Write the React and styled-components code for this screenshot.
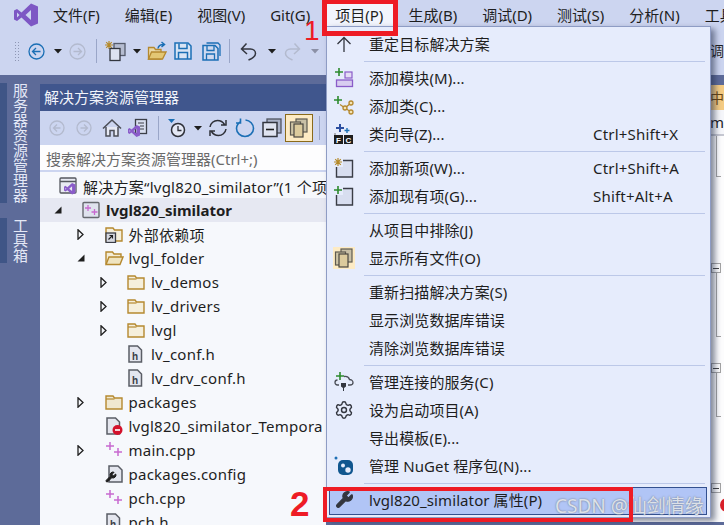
import React from "react"
import styled, { createGlobalStyle } from "styled-components"
import { Settings, Wrench } from "lucide-react"

const colors = {
  chrome: "#ccd5f0",
  band: "#5d6b99",
  title: "#40568d",
  tree: "#f6f8fc",
  menu: "#e6ecfc",
  text: "#1e1e1e",
  red: "#ee1c25",
  tan: "#b5892f",
  blue: "#1b6fb5",
  purple: "#8a5cc9",
  pink: "#c86ad0",
  green: "#2e8b2e",
  grey: "#4a4d55",
  disabled: "#b3bace",
}

const GlobalStyle = createGlobalStyle`
  html, body {
    margin: 0;
    padding: 0;
    background: ${colors.band};
  }

  body {
    font-family: "Noto Sans", "Noto Sans CJK SC", sans-serif;
    font-size: 15px;
    color: ${colors.text};
  }

  svg {
    flex-shrink: 0;
  }
`

const Page = styled.div`
  position: relative;
  display: flex;
  flex-direction: column;
  width: 724px;
  height: 525px;
  overflow: hidden;
  background: ${colors.band};
`

const MenuBar = styled.div`
  display: flex;
  align-items: center;
  flex-shrink: 0;
  gap: 25px;
  height: 33px;
  padding: 0 0 3px 14px;
  box-sizing: border-box;
  background: ${colors.chrome};
  white-space: nowrap;
`

const LogoSlot = styled.div`
  display: flex;
  margin-right: -10px;
  width: 24px;
`

const MenuTitle = styled.span`
  position: relative;
  z-index: 0;
  line-height: 20px;

  ${props =>
    props.$active &&
    `
    &::before {
      content: "";
      position: absolute;
      z-index: -1;
      inset: -10px -10px -8px -10px;
      background: #f2f5fd;
    }
  `}
`

const Toolbar = styled.div`
  display: flex;
  align-items: flex-start;
  flex-shrink: 0;
  height: 42px;
  padding: 6px 0 0 6px;
  box-sizing: border-box;
  background: ${colors.chrome};
  overflow: hidden;
  white-space: nowrap;
`

const Slot = styled.div`
  display: flex;
  align-items: center;
  justify-content: center;
  flex-shrink: 0;
  width: ${props => props.$w}px;
  height: 24px;
`

const Grip = styled.div`
  width: 5px;
  height: 20px;
  background-image: radial-gradient(#8e97b4 0.6px, transparent 0.7px);
  background-size: 3px 3px;
`

const Divider = styled.div`
  flex-shrink: 0;
  width: 1px;
  height: 24px;
  background: #9aa6c8;
`

const Clipped = styled.span`
  flex-shrink: 0;
  line-height: 24px;
  font-size: 14px;
`

const Body = styled.div`
  display: flex;
  flex: 1;
  min-height: 0;
`

const SideRail = styled.div`
  display: flex;
  flex-direction: column;
  flex-shrink: 0;
  gap: 15px;
  width: 40px;
  padding-top: 8px;
  box-sizing: border-box;
`

const SideTab = styled.div`
  width: 33px;
  border-left: 7px solid #3f5586;
  box-sizing: border-box;
  line-height: 27px;
  writing-mode: vertical-rl;
  color: #e4e8f6;
`

const Explorer = styled.div`
  display: flex;
  flex-direction: column;
  flex-shrink: 0;
  width: 286px;
  padding-top: 9px;
  box-sizing: border-box;
`

const ExplorerTitle = styled.div`
  flex-shrink: 0;
  height: 27px;
  padding-left: 4px;
  line-height: 26px;
  background: ${colors.title};
  color: #f2f4fb;
`

const ExplorerTools = styled.div`
  display: flex;
  align-items: center;
  flex-shrink: 0;
  height: 34px;
  padding-left: 4px;
  background: ${colors.chrome};
`

const ToggleBox = styled.div`
  display: flex;
  align-items: center;
  justify-content: center;
  flex-shrink: 0;
  width: 28px;
  height: 28px;
  margin: 0 3px;
  border: 1px solid #8a6a1a;
  box-sizing: border-box;
  background: #fdebc4;
`

const SearchBox = styled.div`
  flex-shrink: 0;
  height: 27px;
  padding-left: 6px;
  border-bottom: 2px solid ${colors.chrome};
  box-sizing: border-box;
  line-height: 28px;
  background: #fdfdfe;
  color: #6a6a6a;
  white-space: nowrap;
`

const Tree = styled.div`
  flex: 1;
  padding-top: 2px;
  overflow: hidden;
  background: ${colors.tree};
`

const Row = styled.div`
  display: flex;
  align-items: center;
  height: 24px;
  padding-left: ${props => 8 + props.$depth * 22.5}px;
  background: ${props => (props.$selected ? "#e6e8f2" : "transparent")};
  font-weight: ${props => (props.$selected ? 700 : 400)};
  letter-spacing: ${props => (props.$selected ? 0 : 0.25)}px;
  white-space: nowrap;
`

const RootRow = styled(Row)`
  padding-left: 19px;
`

const ArrowCell = styled.div`
  display: flex;
  align-items: center;
  justify-content: center;
  flex-shrink: 0;
  width: 20px;
  margin-right: 14px;
`

const TreeIcon = styled.div`
  display: flex;
  flex-shrink: 0;
  width: 18px;
  margin-right: 6px;
`

const Editor = styled.div`
  display: flex;
  flex: 1;
  flex-direction: column;
  min-width: 0;
  padding-top: 10px;
`

const EditorTab = styled.div`
  flex-shrink: 0;
  height: 25px;
  text-align: right;
  line-height: 25px;
  font-size: 14px;
  background: #f5cc84;
  color: #6b4513;
  overflow: hidden;
`

const NavBar = styled.div`
  flex-shrink: 0;
  height: 26px;
  border-bottom: 2px solid #c6c8d2;
  box-sizing: border-box;
  text-align: right;
  line-height: 24px;
  background: #f6f7fb;
  overflow: hidden;
`

const Code = styled.div`
  display: flex;
  flex: 1;
  justify-content: flex-end;
  min-height: 0;
  background: #fdfdfe;
`

const Outline = styled.div`
  display: flex;
  flex-direction: column;
  flex-shrink: 0;
  width: 13px;
  overflow: hidden;
`

const OutlineGap = styled.div`
  flex-shrink: 0;
  height: ${props => props.$h}px;
`

const OutlineRun = styled.div`
  flex-shrink: 0;
  width: 5px;
  height: ${props => props.$h}px;
  margin-left: 5px;
  border-left: 1px solid #a5a5a5;
  border-bottom: 1px solid #a5a5a5;
  box-sizing: border-box;
`

const OutlineBox = styled.div`
  display: flex;
  align-items: center;
  justify-content: center;
  flex-shrink: 0;
  width: 10px;
  height: 10px;
  border: 1px solid #a5a5a5;
  box-sizing: border-box;
  background: #fff;

  &::after {
    content: "";
    width: 6px;
    height: 1px;
    background: #444;
  }
`

const BreakDot = styled.div`
  flex-shrink: 0;
  width: 14px;
  height: 14px;
  margin-left: 9px;
  border-radius: 50%;
  background: #d9202a;
`

const BottomBand = styled.div`
  flex-shrink: 0;
  height: 3px;
  background: ${colors.band};
`

const Dropdown = styled.div`
  position: absolute;
  top: 26px;
  left: 326px;
  width: 385px;
  padding: 4px 3px 2px 2px;
  border: 1px solid #8e9cc4;
  box-sizing: border-box;
  background: ${colors.menu};
  box-shadow: 4px 3px 6px rgba(30, 40, 70, 0.55);
`

const MenuRow = styled.div`
  position: relative;
  display: flex;
  align-items: center;
  height: 28px;
  padding: 0 23px 3px 0;
  box-sizing: border-box;
  white-space: nowrap;
  ${props =>
    props.$selected &&
    `
    background: #b1c5f6;
    outline: 1px solid #33508f;
    outline-offset: -1px;
  `}
`

const MenuIcon = styled.div`
  display: flex;
  align-items: center;
  justify-content: center;
  flex-shrink: 0;
  width: ${props => (props.$boxed ? "22px" : "30px")};
  height: ${props => (props.$boxed ? "22px" : "25px")};
  margin: ${props => (props.$boxed ? "0 14px 0 4px" : "0 10px 0 0")};
  background: ${props => (props.$boxed ? "#fdebc4" : "transparent")};
`

const MenuLabel = styled.span`
  flex: 1;
  letter-spacing: 0.1px;
`

const Shortcut = styled.span`
  width: 91px;
  letter-spacing: 0.2px;
`

const Separator = styled.div`
  height: 1px;
  margin: 2px 2px 3px 35px;
  background: #bcc8e8;
`

const Watermark = styled.span`
  position: absolute;
  top: 467px;
  left: 228px;
  font-size: 19px;
  line-height: 24px;
  white-space: nowrap;
  color: #dde1e8;
  text-shadow: 0 0 2px #6a7280;
`

const TopMark = styled.div`
  position: absolute;
  top: -1px;
  left: 322px;
  width: 76px;
  height: 37px;
  border: 5px solid ${colors.red};
  box-sizing: border-box;
`

const BottomMark = styled.div`
  position: absolute;
  top: 487px;
  left: 323px;
  width: 310px;
  height: 35px;
  border: 4px solid ${colors.red};
  box-sizing: border-box;
`

const StepNumber = styled.span`
  position: absolute;
  top: ${props => props.$top}px;
  left: ${props => props.$left}px;
  font-family: "Liberation Sans", sans-serif;
  font-size: ${props => props.$size}px;
  font-weight: ${props => props.$weight};
  line-height: 1;
  color: ${colors.red};
`

const Svg = ({ size = 18, w, h, children, ...rest }) => (
  <svg width={w || size} height={h || size} viewBox={`0 0 ${w || size} ${h || size}`} fill="none" {...rest}>
    {children}
  </svg>
)

const VsLogo = () => (
  <Svg size={24}>
    <path
      fillRule="evenodd"
      d="M17 .5 24 3.500V20.500L17 23.500 7.500 14.500 3 18 0 16.500V7.500L3 6 7.500 9.500ZM17 7 11.500 12 17 17ZM3 9.500V14.500L5.500 12Z"
      fill="#7d57c4"
    />
  </Svg>
)

const Caret = ({ off }) => (
  <Svg w={8} h={5}>
    <path d="M0 0H8L4 4.500Z" fill={off ? "#8b90a6" : "#1e1e1e"} />
  </Svg>
)

const CircleArrow = ({ color, flip, size = 17 }) => (
  <Svg size={size} style={flip ? { transform: "scaleX(-1)" } : undefined}>
    <circle cx={size / 2} cy={size / 2} r={size / 2 - 1} stroke={color} strokeWidth="1.300" />
    <path d={`M${size - 4.5} ${size / 2}H4.500M8 ${size / 2 - 3.5}l-3.500 3.500 3.500 3.500`} stroke={color} strokeWidth="1.300" />
  </Svg>
)

const Sparkle = ({ x = 0, y = 0 }) => (
  <g transform={`translate(${x} ${y})`} stroke="#b58a2a" strokeWidth="1.200">
    <path d="M4 0V8M0 4H8M1.200 1.200 6.800 6.800M6.800 1.200 1.200 6.800" />
  </g>
)

const GreenPlus = ({ x = 0, y = 0 }) => (
  <path d={`M${x + 4} ${y}V${y + 8}M${x} ${y + 4}H${x + 8}`} stroke={colors.green} strokeWidth="1.600" />
)

const NewProjectIcon = () => (
  <Svg size={22}>
    <Sparkle x={0} y={1} />
    <rect x="9" y="3.500" width="11" height="12" fill="#b5bcd0" stroke="#555b6b" strokeWidth="1.300" />
    <rect x="5" y="8.500" width="10" height="12" fill="#dde2f0" stroke="#33363f" strokeWidth="1.300" />
  </Svg>
)

const OpenFolderIcon = () => (
  <Svg size={20}>
    <path d="M1.500 18V6.500H7l1.500 2H14V18Z" fill="#ead9a8" stroke={colors.tan} strokeWidth="1.300" />
    <path d="M1.500 18 4.500 11H19L15.500 18Z" fill="#e3c774" stroke={colors.tan} strokeWidth="1.300" />
    <path d="M11 7.500C11.500 4.500 13.500 3.500 16.500 3.500M14.500 1 17.500 3.500 14.500 6" stroke={colors.blue} strokeWidth="1.500" />
  </Svg>
)

const SaveIcon = () => (
  <Svg size={18}>
    <path d="M1 1H14L17 4V17H1Z" fill="#d8e4f4" stroke={colors.blue} strokeWidth="1.500" />
    <path d="M5 1.500V6.500H13V1.500M4.500 17V10.500H13.500V17" stroke={colors.blue} strokeWidth="1.500" />
  </Svg>
)

const SaveAllIcon = () => (
  <Svg size={19}>
    <path d="M4.500 1H16L18 3V14" stroke={colors.blue} strokeWidth="1.300" />
    <path d="M1 3.500H13L16 6.500V18H1Z" fill="#cfdaf0" stroke={colors.blue} strokeWidth="1.500" />
    <path d="M5 4V8.500H12V4M4.500 18V12H12.500V18" stroke={colors.blue} strokeWidth="1.300" />
  </Svg>
)

const UndoIcon = ({ color = "#33363f", flip }) => (
  <Svg w={17} h={19} style={flip ? { transform: "scaleX(-1)" } : undefined}>
    <path d="M1.500 7H10.500C13.500 7 15.500 9 15.500 11.500 15.500 14.500 12 16.500 8.500 18M6.500 1.500 1.500 7 7 12" stroke={color} strokeWidth="1.500" />
  </Svg>
)

const HomeIcon = () => (
  <Svg size={20}>
    <path d="M1 10.500 10 2 19 10.500" stroke="#4b4e57" strokeWidth="1.600" />
    <path d="M4 9V18H8V12.500H12V18H16V9" stroke="#4b4e57" strokeWidth="1.500" fill="#e6e9f4" />
  </Svg>
)

const VsMark = ({ x = 0, y = 0, s = 1 }) => (
  <path
    transform={`translate(${x} ${y}) scale(${s})`}
    fillRule="evenodd"
    d="M8.500 0 12 1.500V10.500L8.500 12 3.500 7.500 1.500 9 0 8V4L1.500 3 3.500 4.500ZM8.500 3.500 5.500 6 8.500 8.500ZM1.500 5V7L2.500 6Z"
    fill={colors.purple}
  />
)

const VsDocIcon = () => (
  <Svg size={20}>
    <rect x="7.500" y="1.500" width="11" height="14" fill="#d8deef" stroke="#3c3f48" strokeWidth="1.300" />
    <path d="M10 5H16M12 8H16M12 11H16" stroke="#3c3f48" strokeWidth="1.200" />
    <VsMark x={0} y={7} />
  </Svg>
)

const HistoryIcon = () => (
  <Svg size={20}>
    <path d="M1 1H8L4.500 5Z" fill={colors.blue} />
    <circle cx="11" cy="12" r="6.500" fill="#e4e8f5" stroke="#2e3038" strokeWidth="1.500" />
    <path d="M11 8V12.500H14.500" stroke="#2e3038" strokeWidth="1.300" />
  </Svg>
)

const SyncIcon = () => (
  <Svg size={20}>
    <path d="M2 9C2.500 5 6 2.500 9.500 2.500 12.500 2.500 15 4 16.500 6.500M13 7H18V2M18 11C17.500 15 14 17.500 10.500 17.500 7.500 17.500 5 16 3.500 13.500M7 13H2V18" stroke="#2e3038" strokeWidth="1.500" />
  </Svg>
)

const RefreshIcon = () => (
  <Svg size={20}>
    <path d="M6 3.500C3.500 5 1.500 7.500 1.500 10.500 1.500 15 5.500 18.500 10 18.500S18.500 15 18.500 10.500C18.500 6 15 2.500 10.500 2M5.500 .5V5H1" stroke={colors.blue} strokeWidth="1.600" />
  </Svg>
)

const CollapseIcon = () => (
  <Svg size={20}>
    <rect x="5" y="1" width="14" height="14" fill="#aab2c8" stroke="#50545f" strokeWidth="1.300" />
    <rect x="1" y="4.500" width="14" height="14" fill="#dfe3f0" stroke="#33363f" strokeWidth="1.500" />
    <path d="M4 11.500H12" stroke="#1e1e1e" strokeWidth="1.600" />
  </Svg>
)

const ShowAllIcon = ({ size = 20 }) => (
  <Svg size={size}>
    <rect x="7" y="1" width="11" height="13" fill="#c9c0a6" stroke="#5e5a50" strokeWidth="1.200" />
    <rect x="1.500" y="4" width="10" height="13" fill="#cfc5a6" stroke="#5e5a50" strokeWidth="1.200" />
    <rect x="5" y="6" width="9" height="13" fill="#dccb9d" stroke="#4a4740" strokeWidth="1.200" />
  </Svg>
)

const UpArrowIcon = () => (
  <Svg size={16}>
    <path d="M8 16V1.500M1.500 8 8 1.500 14.500 8" stroke="#33363f" strokeWidth="1.300" />
  </Svg>
)

const AddModuleIcon = () => (
  <Svg size={20}>
    <GreenPlus x={1} y={0} />
    <rect x="11" y="4" width="7" height="6" fill="#e3ddf4" stroke={colors.purple} strokeWidth="1.200" />
    <rect x="2.500" y="12" width="16" height="6.500" fill="#d8cdf0" stroke={colors.purple} strokeWidth="1.300" />
  </Svg>
)

const AddClassIcon = () => (
  <Svg size={20}>
    <GreenPlus x={0} y={0} />
    <path d="M6 8.500 11 12M11 12 17 7M11 12 17 16" stroke={colors.tan} strokeWidth="1.300" />
    <circle cx="11" cy="12" r="2" stroke={colors.tan} strokeWidth="1.300" fill="#f3e3b5" />
    <circle cx="17" cy="7" r="2" stroke={colors.tan} strokeWidth="1.300" fill="#f3e3b5" />
    <circle cx="17" cy="16" r="2" stroke={colors.tan} strokeWidth="1.300" fill="#f3e3b5" />
  </Svg>
)

const WizardLetter = styled.text`
  font-family: "Liberation Sans", sans-serif;
  font-size: 8px;
  font-weight: 700;
  fill: #fff;
`

const ClassWizardIcon = () => (
  <Svg size={20}>
    <path d="M6 0V8M2 4H10" stroke="#2d4fa0" strokeWidth="2" />
    <path d="M13 4V9M10.500 6.500H15.500" stroke={colors.blue} strokeWidth="1.400" />
    <path d="M1 9V12H9" stroke="#777" strokeWidth="1" />
    <rect x="0" y="11" width="9" height="9" fill="#1e1e1e" />
    <rect x="10" y="11" width="9" height="9" fill="#1e1e1e" />
    <WizardLetter x="2" y="18.500">F</WizardLetter>
    <WizardLetter x="11.500" y="18.500">C</WizardLetter>
  </Svg>
)

const NewItemIcon = () => (
  <Svg size={20}>
    <path d="M7 2.500H18.500V19H2.500V9" fill="#d8def0" stroke="#3a3d46" strokeWidth="1.400" />
    <rect x="0" y="0" width="9" height="9" fill={colors.menu} />
    <Sparkle x={0} y={0} />
  </Svg>
)

const ExistingItemIcon = () => (
  <Svg size={20}>
    <path d="M7 2.500H18.500V19H2.500V9" fill="#d8def0" stroke="#3a3d46" strokeWidth="1.400" />
    <rect x="0" y="0" width="9" height="9" fill={colors.menu} />
    <GreenPlus x={0} y={0} />
  </Svg>
)

const CloudIcon = () => (
  <Svg size={20}>
    <GreenPlus x={2} y={0} />
    <path d="M5 13H3.500C2 13 1 12 1 10.500S2 8 3.500 8M10 4.500C13 4 15 5.500 15.500 7.500 17.500 7.500 19 9 19 10.500S17.500 13 16 13H14" stroke="#4b4e57" strokeWidth="1.300" />
    <path d="M7 11H12V14.500L10 16V19H9V16L7 14.500Z" fill="#33363f" />
  </Svg>
)

const NugetIcon = () => (
  <Svg size={20}>
    <circle cx="2" cy="2" r="1.500" fill="#1f70b5" />
    <rect x="4" y="4" width="15" height="15" rx="5" fill="#10568f" />
    <circle cx="9" cy="9.500" r="2" fill="#e6ecfc" />
    <circle cx="14" cy="14" r="2.700" fill="#e6ecfc" />
  </Svg>
)

const SolutionIcon = () => (
  <Svg size={18}>
    <rect x="1" y="1" width="16" height="15" rx="1" fill="#e8eaf2" stroke="#55585f" strokeWidth="1.300" />
    <path d="M1 4.500H17" stroke="#55585f" strokeWidth="1.500" />
    <VsMark x={5} y={6} s={0.95} />
  </Svg>
)

const ProjectIcon = () => (
  <Svg size={18}>
    <rect x="1" y="1.500" width="16" height="15" rx="1" fill="#dfe2ee" stroke="#66696f" strokeWidth="1.400" />
    <path d="M6 4V10M3 7H9M12.500 8V14M9.500 11H15.500" stroke={colors.pink} strokeWidth="1.300" />
  </Svg>
)

const FolderIcon = ({ fill = "#f5efdc" }) => (
  <Svg size={18}>
    <path d="M1 3H8L9.500 5H17V16H1Z" fill={fill} stroke={colors.tan} strokeWidth="1.400" />
    <path d="M1 6H9.500" stroke={colors.tan} strokeWidth="1.200" />
  </Svg>
)

const OpenTreeFolderIcon = () => (
  <Svg size={19}>
    <path d="M1 15V3H7.500L9 5H16V8" fill="#f4edd7" stroke={colors.tan} strokeWidth="1.400" />
    <path d="M1 15.500 4 8H18L15 15.500Z" fill="#efe4c0" stroke={colors.tan} strokeWidth="1.400" />
  </Svg>
)

const RefFolderIcon = () => (
  <Svg size={18}>
    <path d="M1 3H8L9.500 5H17V16H1Z" fill="#f5efdc" stroke={colors.tan} strokeWidth="1.400" />
    <rect x="1" y="8" width="9.500" height="9.500" fill="#d5d7de" stroke="#3a3d46" strokeWidth="1.300" />
    <path d="M3.500 14.500 7.500 10.500M4.500 10.500H7.500V13.500" stroke="#1e1e1e" strokeWidth="1.100" />
  </Svg>
)

const FileShape = () => (
  <path d="M2 1H10.500L14.500 5V17H2Z" fill="#e4e6ee" stroke="#5a5d65" strokeWidth="1.500" />
)

const HeaderLetter = styled.text`
  font-family: "Liberation Sans", sans-serif;
  font-size: 10px;
  font-weight: 700;
  fill: #3a3d46;
`

const HeaderFileIcon = () => (
  <Svg size={18}>
    <FileShape />
    <HeaderLetter x="5" y="14.500">h</HeaderLetter>
  </Svg>
)

const BlockedFileIcon = () => (
  <Svg size={18}>
    <FileShape />
    <circle cx="12.500" cy="13" r="5" fill="#d3112b" />
    <path d="M10 13H15" stroke="#fff" strokeWidth="1.600" />
  </Svg>
)

const CppIcon = () => (
  <Svg size={18}>
    <path d="M5 1V9M1 5H9M13 7V15M9 11H17" stroke={colors.pink} strokeWidth="1.500" />
  </Svg>
)

const ConfigIcon = () => (
  <Svg size={18}>
    <path d="M4 1H13L17 5V17H4Z" fill="#e4e6ee" stroke="#5a5d65" strokeWidth="1.500" />
    <Wrench x={0} y={6} width={12} height={12} color="#1e1e1e" fill="#1e1e1e" strokeWidth={2} />
  </Svg>
)

const TreeArrow = ({ open }) =>
  open ? (
    <Svg w={8} h={8}>
      <path d="M7.500 .5V7.500H.5Z" fill="#1e1e1e" />
    </Svg>
  ) : (
    <Svg w={7} h={11}>
      <path d="M1 .8 6 5.500 1 10.200Z" fill={colors.tree} stroke="#1e1e1e" strokeWidth="1.300" />
    </Svg>
  )

const treeRows = [
  { depth: 0, arrow: "open", icon: <ProjectIcon />, label: "lvgl820_similator", selected: true },
  { depth: 1, arrow: "closed", icon: <RefFolderIcon />, label: "外部依赖项" },
  { depth: 1, arrow: "open", icon: <OpenTreeFolderIcon />, label: "lvgl_folder" },
  { depth: 2, arrow: "closed", icon: <FolderIcon />, label: "lv_demos" },
  { depth: 2, arrow: "closed", icon: <FolderIcon />, label: "lv_drivers" },
  { depth: 2, arrow: "closed", icon: <FolderIcon />, label: "lvgl" },
  { depth: 2, icon: <HeaderFileIcon />, label: "lv_conf.h" },
  { depth: 2, icon: <HeaderFileIcon />, label: "lv_drv_conf.h" },
  { depth: 1, arrow: "closed", icon: <FolderIcon fill="#f0e8d0" />, label: "packages" },
  { depth: 1, icon: <BlockedFileIcon />, label: "lvgl820_similator_Tempora" },
  { depth: 1, arrow: "closed", icon: <CppIcon />, label: "main.cpp" },
  { depth: 1, icon: <ConfigIcon />, label: "packages.config" },
  { depth: 1, icon: <CppIcon />, label: "pch.cpp" },
  { depth: 1, icon: <HeaderFileIcon />, label: "pch.h" },
]

const menuItems = [
  { icon: <UpArrowIcon />, label: "重定目标解决方案" },
  "sep",
  { icon: <AddModuleIcon />, label: "添加模块(M)..." },
  { icon: <AddClassIcon />, label: "添加类(C)..." },
  { icon: <ClassWizardIcon />, label: "类向导(Z)...", shortcut: "Ctrl+Shift+X" },
  "sep",
  { icon: <NewItemIcon />, label: "添加新项(W)...", shortcut: "Ctrl+Shift+A" },
  { icon: <ExistingItemIcon />, label: "添加现有项(G)...", shortcut: "Shift+Alt+A" },
  "sep",
  { label: "从项目中排除(J)" },
  { icon: <ShowAllIcon />, boxed: true, label: "显示所有文件(O)" },
  "sep",
  { label: "重新扫描解决方案(S)" },
  { label: "显示浏览数据库错误" },
  { label: "清除浏览数据库错误" },
  "sep",
  { icon: <CloudIcon />, label: "管理连接的服务(C)" },
  { icon: <Settings size={20} color="#33363f" strokeWidth={1.7} />, label: "设为启动项目(A)" },
  { label: "导出模板(E)..." },
  { icon: <NugetIcon />, label: "管理 NuGet 程序包(N)..." },
  "sep",
  { icon: <Wrench size={19} color="#33363f" fill="#33363f" strokeWidth={1.5} />, label: "lvgl820_similator 属性(P)", selected: true },
]

const menuTitles = ["文件(F)", "编辑(E)", "视图(V)", "Git(G)", "项目(P)", "生成(B)", "调试(D)", "测试(S)", "分析(N)", "工具(T)"]

const App = () => (
  <Page>
    <GlobalStyle />

    <MenuBar>
      <LogoSlot>
        <VsLogo />
      </LogoSlot>
      {menuTitles.map(title => (
        <MenuTitle key={title} $active={title === "项目(P)"}>
          {title}
        </MenuTitle>
      ))}
    </MenuBar>

    <Toolbar>
      <Slot $w={20}><Grip /></Slot>
      <Slot $w={20}><CircleArrow color={colors.blue} /></Slot>
      <Slot $w={24}><Caret /></Slot>
      <Slot $w={14}><CircleArrow color={colors.disabled} flip /></Slot>
      <Slot $w={24}><Divider /></Slot>
      <Slot $w={16}><NewProjectIcon /></Slot>
      <Slot $w={26}><Caret /></Slot>
      <Slot $w={14}><OpenFolderIcon /></Slot>
      <Slot $w={38}><SaveIcon /></Slot>
      <Slot $w={18}><SaveAllIcon /></Slot>
      <Slot $w={18}><Divider /></Slot>
      <Slot $w={20}><UndoIcon /></Slot>
      <Slot $w={28}><Caret /></Slot>
      <Slot $w={12}><UndoIcon color={colors.disabled} flip /></Slot>
      <Slot $w={34}><Caret off /></Slot>
      <Slot $w={378} />
      <Clipped>调试</Clipped>
    </Toolbar>

    <Body>
      <SideRail>
        <SideTab>服务器资源管理器</SideTab>
        <SideTab>工具箱</SideTab>
      </SideRail>

      <Explorer>
        <ExplorerTitle>解决方案资源管理器</ExplorerTitle>
        <ExplorerTools>
          <Slot $w={26}><CircleArrow color={colors.disabled} size={16} /></Slot>
          <Slot $w={28}><CircleArrow color={colors.disabled} size={16} flip /></Slot>
          <Slot $w={28}><HomeIcon /></Slot>
          <Slot $w={24}><VsDocIcon /></Slot>
          <Slot $w={16}><Divider /></Slot>
          <Slot $w={22}><HistoryIcon /></Slot>
          <Slot $w={20}><Caret /></Slot>
          <Slot $w={20}><SyncIcon /></Slot>
          <Slot $w={34}><RefreshIcon /></Slot>
          <Slot $w={20}><CollapseIcon /></Slot>
          <ToggleBox><ShowAllIcon /></ToggleBox>
          <Slot $w={6}><Divider /></Slot>
        </ExplorerTools>
        <SearchBox>搜索解决方案资源管理器(Ctrl+;)</SearchBox>
        <Tree>
          <RootRow $depth={0}>
            <TreeIcon><SolutionIcon /></TreeIcon>
            解决方案“lvgl820_similator”(1 个项目/共 1 个)
          </RootRow>
          {treeRows.map(row => (
            <Row key={row.label} $depth={row.depth} $selected={row.selected}>
              <ArrowCell>{row.arrow && <TreeArrow open={row.arrow === "open"} />}</ArrowCell>
              <TreeIcon>{row.icon}</TreeIcon>
              {row.label}
            </Row>
          ))}
        </Tree>
      </Explorer>

      <Editor>
        <EditorTab>中</EditorTab>
        <NavBar>m</NavBar>
        <Code>
          <Outline>
            <OutlineRun $h={41} />
            <OutlineGap $h={86} />
            <OutlineBox />
            <OutlineRun $h={64} />
            <OutlineGap $h={26} />
            <OutlineBox />
            <OutlineRun $h={44} />
            <OutlineGap $h={66} />
            <OutlineBox />
            <OutlineGap $h={5} />
            <BreakDot />
          </Outline>
        </Code>
        <BottomBand />
      </Editor>
    </Body>

    <Dropdown>
      {menuItems.map((item, i) =>
        item === "sep" ? (
          <Separator key={i} />
        ) : (
          <MenuRow key={item.label} $selected={item.selected}>
            <MenuIcon $boxed={item.boxed}>{item.icon}</MenuIcon>
            <MenuLabel>{item.label}</MenuLabel>
            {item.shortcut && <Shortcut>{item.shortcut}</Shortcut>}
          </MenuRow>
        )
      )}
      <Watermark>CSDN @仙剑情缘</Watermark>
    </Dropdown>

    <TopMark />
    <BottomMark />
    <StepNumber $top={17} $left={304} $size={28} $weight={400}>1</StepNumber>
    <StepNumber $top={486} $left={290} $size={35} $weight={700}>2</StepNumber>
  </Page>
)

export default App
